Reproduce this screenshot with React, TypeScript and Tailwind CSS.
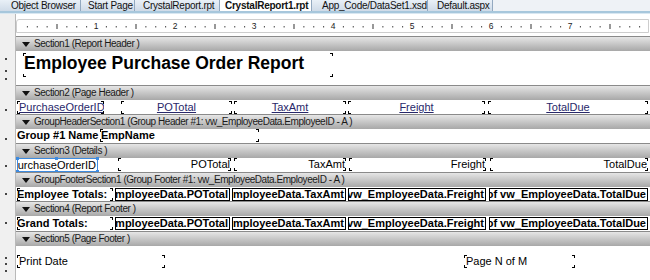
import type { ReactNode } from "react";

const FONT = "font-['Liberation_Sans',Arial,sans-serif]";

type Tab = { label: string; w: string; pl: string; active?: boolean };

const tabs: Tab[] = [
    { label: "Object Browser", w: "w-[81px]", pl: "pl-[11px]" },
    { label: "Start Page", w: "w-[54px]", pl: "pl-[7px]" },
    { label: "CrystalReport.rpt", w: "w-[85px]", pl: "pl-[8px]" },
    { label: "CrystalReport1.rpt", w: "w-[92px]", pl: "pl-[5px]", active: true },
    { label: "App_Code/DataSet1.xsd", w: "w-[116px]", pl: "pl-[10px]" },
    { label: "Default.aspx", w: "w-[65px]", pl: "pl-[9px]" },
];

function TabBar() {
    return (
        <div className="flex h-[11px] bg-[#eef2f6]">
            {tabs.map((t) => (
                <div
                    key={t.label}
                    className={`${t.w} ${t.pl} flex h-full items-center overflow-hidden whitespace-nowrap border-r border-[#93a9c0] text-[10px] leading-none tracking-[-0.25px] text-[#111] ${
                        t.active ? "bg-white font-bold" : "bg-linear-to-b from-[#e9f0f7] to-[#cfdbe8]"
                    }`}
                >
                    {t.label}
                </div>
            ))}
        </div>
    );
}

function Ruler() {
    const marks = [];
    for (let i = 1; i < 64; i++) {
        const x = i * 9.875;
        if (i % 8 === 0) {
            marks.push(
                <text key={i} x={x} y={9} fontSize="8.5" textAnchor="middle" fill="#222" fontFamily="Liberation Sans, Arial, sans-serif">
                    {i / 8}
                </text>
            );
        } else if (i % 8 === 4) {
            marks.push(<rect key={i} x={x} y={4} width={1} height={5} fill="#333" />);
        } else {
            marks.push(<rect key={i} x={x} y={6} width={1} height={1.5} fill="#444" />);
        }
    }
    return (
        <div className="h-[14px] rounded-tl-[3px] border border-[#cdcdcd] bg-white">
            <svg width="634" height="12" className="block">
                {marks}
            </svg>
        </div>
    );
}

function Corners() {
    return (
        <>
            <span className="absolute left-0 top-0 h-[3px] w-[3px] border-l border-t border-black" />
            <span className="absolute right-0 top-0 h-[3px] w-[3px] border-r border-t border-black" />
            <span className="absolute bottom-0 left-0 h-[3px] w-[3px] border-b border-l border-black" />
            <span className="absolute bottom-0 right-0 h-[3px] w-[3px] border-b border-r border-black" />
        </>
    );
}

function Row({ h, dots = [], children }: { h: string; dots?: number[]; children?: ReactNode }) {
    return (
        <div className={`flex ${h}`}>
            <div className="relative w-[16px] shrink-0 border-r border-[#b9b9b9] bg-[#f0f0f0]">
                {dots.map((d) => (
                    <span key={d} className="absolute left-[5px] h-[2px] w-[2px] bg-[#444]" style={{ top: d }} />
                ))}
            </div>
            <div className="relative min-w-0 flex-1 bg-white">{children}</div>
        </div>
    );
}

function Bar({ label }: { label: string }) {
    return (
        <Row h="h-[15px]">
            <div className="flex h-full items-center border-t border-[#8a8a8a] bg-linear-to-b from-[#e6e6e6] to-[#a8a8a8] pl-[6px]">
                <svg width="8" height="5" className="mr-[4px] shrink-0">
                    <polygon points="0,0 8,0 4,5" fill="#111" />
                </svg>
                <span className="whitespace-nowrap text-[10px] leading-none tracking-[-0.45px] text-[#1a1a1a]">{label}</span>
            </div>
        </Row>
    );
}

function Field({
    cls,
    align = "left",
    children,
    corners = true,
    boxed = false,
}: {
    cls: string;
    align?: "left" | "right" | "center";
    children: ReactNode;
    corners?: boolean;
    boxed?: boolean;
}) {
    const a = align === "right" ? "justify-end" : align === "center" ? "justify-center" : "justify-start";
    return (
        <div
            className={`relative flex h-[13px] shrink-0 items-center overflow-hidden whitespace-nowrap ${a} ${
                boxed ? "border border-black px-[1px]" : ""
            } ${cls}`}
        >
            {corners && <Corners />}
            {children}
        </div>
    );
}

function Handle({ cls }: { cls: string }) {
    return <span className={`absolute h-[3px] w-[3px] bg-[#3d8be0] ${cls}`} />;
}

export default function App() {
    return (
        <div className={`h-[280px] w-[650px] overflow-hidden bg-white ${FONT}`}>
            <TabBar />
            <div className="h-[3px] border-b border-[#d8e7f1] bg-[#a7c7dc]" />

            <Row h="h-[22px]">
                <div className="pr-[1px] pt-[5px]">
                    <Ruler />
                </div>
            </Row>

            <Bar label="Section1 (Report Header )" />
            <Row h="h-[34px]" dots={[7, 19, 27]}>
                <div className="relative ml-[7px] mt-[2px] h-[24px] w-[310px]">
                    <Corners />
                    <span className="block pl-[1px] text-[17.5px] font-bold leading-[20px] text-black">
                        Employee Purchase Order Report
                    </span>
                </div>
            </Row>

            <Bar label="Section2 (Page Header )" />
            <Row h="h-[14px]" dots={[9]}>
                <div className="flex pt-[1px] text-[11px] leading-none text-[#28286a] underline">
                    <Field cls="ml-[1px] w-[87px] pl-[2px]">PurchaseOrderID</Field>
                    <Field cls="ml-[17px] w-[111px]" align="center">POTotal</Field>
                    <Field cls="ml-[2px] w-[112px]" align="center">TaxAmt</Field>
                    <Field cls="ml-[2px] w-[137px]" align="center">Freight</Field>
                    <Field cls="ml-[3px] w-[160px]" align="center">TotalDue</Field>
                </div>
            </Row>

            <Bar label="GroupHeaderSection1 (Group Header #1: vw_EmployeeData.EmployeeID - A )" />
            <Row h="h-[14px]" dots={[9]}>
                <div className="flex text-[11px] font-bold leading-none text-black">
                    <Field cls="ml-[1px] w-[83px]" corners={false}>Group #1 Name</Field>
                    <Field cls="w-[159px] pl-[1px]">EmpName</Field>
                </div>
            </Row>

            <Bar label="Section3 (Details )" />
            <Row h="h-[14px]" dots={[7]}>
                <div className="flex text-[11px] leading-none text-black">
                    <div className="relative ml-[1px] flex h-[14px] w-[81px] shrink-0 items-center justify-end overflow-hidden whitespace-nowrap border border-[#3d8be0] pr-[1px]">
                        PurchaseOrderID
                    </div>
                    <Field cls="ml-[20px] w-[113px] pr-[1px]" align="right">POTotal</Field>
                    <Field cls="ml-[3px] w-[112px] pr-[1px]" align="right">TaxAmt</Field>
                    <Field cls="ml-[3px] w-[137px] pr-[1px]" align="right">Freight</Field>
                    <Field cls="ml-[4px] w-[158px] pr-[1px]" align="right">TotalDue</Field>
                </div>
                <Handle cls="left-[0px] top-[-1px]" />
                <Handle cls="left-[39px] top-[-1px]" />
                <Handle cls="left-[80px] top-[-1px]" />
                <Handle cls="left-[0px] top-[12px]" />
                <Handle cls="left-[39px] top-[12px]" />
                <Handle cls="left-[80px] top-[12px]" />
            </Row>

            <Bar label="GroupFooterSection1 (Group Footer #1: vw_EmployeeData.EmployeeID - A )" />
            <Row h="h-[14px]" dots={[6]}>
                <div className="flex pt-[1px] text-[11px] font-bold leading-none text-black">
                    <Field cls="ml-[1px] w-[96px]">Employee Totals:</Field>
                    <Field cls="ml-[2px] w-[115px]" align="right" corners={false} boxed>Sum of vw_EmployeeData.POTotal</Field>
                    <Field cls="ml-[2px] w-[114px]" align="right" corners={false} boxed>Sum of vw_EmployeeData.TaxAmt</Field>
                    <Field cls="ml-[2px] w-[138px]" align="right" corners={false} boxed>Sum of vw_EmployeeData.Freight</Field>
                    <Field cls="ml-[3px] w-[159px]" align="right" corners={false} boxed>Sum of vw_EmployeeData.TotalDue</Field>
                </div>
            </Row>

            <Bar label="Section4 (Report Footer )" />
            <Row h="h-[15px]" dots={[6]}>
                <div className="flex pt-[1px] text-[11px] font-bold leading-none text-black">
                    <Field cls="ml-[1px] w-[96px]">Grand Totals:</Field>
                    <Field cls="ml-[2px] w-[115px]" align="right" corners={false} boxed>Sum of vw_EmployeeData.POTotal</Field>
                    <Field cls="ml-[2px] w-[114px]" align="right" corners={false} boxed>Sum of vw_EmployeeData.TaxAmt</Field>
                    <Field cls="ml-[2px] w-[138px]" align="right" corners={false} boxed>Sum of vw_EmployeeData.Freight</Field>
                    <Field cls="ml-[3px] w-[159px]" align="right" corners={false} boxed>Sum of vw_EmployeeData.TotalDue</Field>
                </div>
            </Row>

            <Bar label="Section5 (Page Footer )" />
            <Row h="h-[40px]" dots={[11, 17, 24]}>
                <div className="flex pt-[9px] text-[11px] leading-none text-black">
                    <Field cls="ml-[1px] w-[148px] pl-[2px]">Print Date</Field>
                    <Field cls="ml-[299px] w-[111px] pl-[2px]">Page N of M</Field>
                </div>
            </Row>
        </div>
    );
}
